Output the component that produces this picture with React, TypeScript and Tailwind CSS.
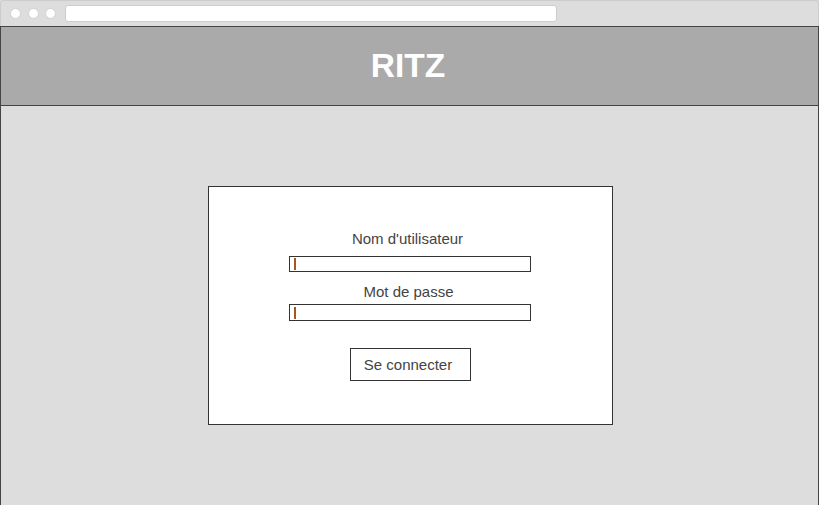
export default function App() {
  return (
    <div className="flex h-[505px] w-[819px] flex-col overflow-hidden bg-[#dddddd] font-['Liberation_Sans',Arial,sans-serif]">
      {/* browser chrome */}
      <div className="flex h-[26px] shrink-0 items-center rounded-t-[4px] border border-b-0 border-[#cccccc] bg-[#dddddd] pl-[9px]">
        <div className="flex gap-[6.5px]">
          <span className="h-[11px] w-[11px] rounded-full border border-[#d0d0d0] bg-white" />
          <span className="h-[11px] w-[11px] rounded-full border border-[#d0d0d0] bg-white" />
          <span className="h-[11px] w-[11px] rounded-full border border-[#d0d0d0] bg-white" />
        </div>
        <div className="ml-[9px] h-[17px] w-[492px] rounded-[3px] border border-[#cccccc] bg-white" />
      </div>

      <div className="flex flex-1 flex-col border-x border-t border-[#444444]">
        <header className="flex h-[79px] shrink-0 items-center justify-center border-b border-[#444444] bg-[#aaaaaa]">
          <h1 className="mr-[3px] text-[33.5px] font-bold leading-none text-white">RITZ</h1>
        </header>

        <main className="flex flex-1 items-center justify-center">
          <div className="ml-[2px] flex h-[239px] w-[405px] flex-col items-center border border-[#333333] bg-white pt-[43px] text-[#444444]">
            <label className="mr-[6px] text-[15px] leading-[17px]">Nom d'utilisateur</label>
            <div className="mt-[9px] mr-[2px] flex h-[16px] w-[242px] items-center border border-[#333333] pl-[4px]">
              <span className="h-[12px] w-[2px] bg-[#a9531d]" />
            </div>
            <label className="mt-[11px] mr-[4px] text-[15px] leading-[17px]">Mot de passe</label>
            <div className="mt-[4px] mr-[2px] flex h-[17px] w-[242px] items-center border border-[#333333] pl-[4px]">
              <span className="h-[12px] w-[2px] bg-[#a9531d]" />
            </div>
            <button className="mt-[27px] h-[33px] w-[121px] border border-[#333333] bg-white pt-[2px] pr-[5px] text-[15px] text-[#444444]">
              Se connecter
            </button>
          </div>
        </main>
      </div>
    </div>
  );
}
